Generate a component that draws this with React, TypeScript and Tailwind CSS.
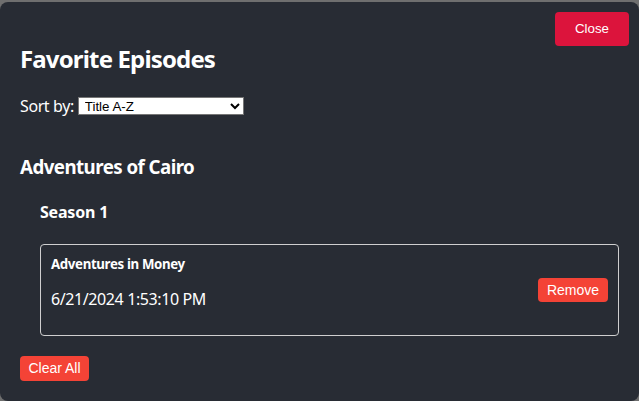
import React, { useState } from 'react';

const favorites = [
  {
    show: 'Adventures of Cairo',
    seasons: [
      {
        name: 'Season 1',
        episodes: [{ id: 1, title: 'Adventures in Money', addedAt: '6/21/2024 1:53:10 PM' }],
      },
    ],
  },
];

const App: React.FC = () => {
  const [sort, setSort] = useState('title-asc');

  return (
    <div className="h-[401px] w-[639px] overflow-hidden bg-[#6f6f6f] pt-[2px] font-['Noto_Sans',sans-serif] text-white">
      <div className="relative h-[399px] rounded-lg bg-[#282c34] px-5 pt-[41px]">
        <button className="absolute right-[10px] top-[10px] h-[34px] w-[74px] rounded-[4px] bg-[#dc143c] font-['Liberation_Sans',sans-serif] text-[13.33px] text-white">
          Close
        </button>

        <h2 className="text-[24px] font-bold leading-[32px] tracking-[-0.85px]">Favorite Episodes</h2>

        <div className="mt-[19px] flex items-center gap-[4px] text-[16px] leading-6">
          <span className="tracking-[-0.4px]">Sort by:</span>
          <select
            value={sort}
            onChange={(e) => setSort(e.target.value)}
            className="h-[18px] w-[166px] border border-[#767676] bg-white pl-[2px] font-['Liberation_Sans',sans-serif] text-[13.33px] leading-[16px] text-black"
          >
            <option value="title-asc">Title A-Z</option>
            <option value="title-desc">Title Z-A</option>
            <option value="date-new">Newest First</option>
            <option value="date-old">Oldest First</option>
          </select>
        </div>

        {favorites.map((fav) => (
          <div key={fav.show}>
            <h3 className="mt-[36px] text-[18.72px] font-bold leading-[26px] tracking-[-0.55px]">{fav.show}</h3>
            {fav.seasons.map((season) => (
              <div key={season.name} className="pl-5">
                <h4 className="mt-5 text-[16px] font-bold leading-6 tracking-[-0.2px]">{season.name}</h4>
                {season.episodes.map((ep) => (
                  <div
                    key={ep.id}
                    className="mt-5 flex items-center justify-between rounded-[4px] border border-[#cfcfcf] px-[10px] py-[10px]"
                  >
                    <div className="pb-[14px]">
                      <h5 className="text-[13.28px] font-bold leading-[18px] tracking-[-0.35px]">{ep.title}</h5>
                      <p className="mt-[14px] text-[16px] leading-6 tracking-[-0.4px]">{ep.addedAt}</p>
                    </div>
                    <button className="h-[24px] w-[70px] rounded-[4px] bg-[#f44336] font-['Liberation_Sans',sans-serif] text-[14px] text-white">
                      Remove
                    </button>
                  </div>
                ))}
              </div>
            ))}
          </div>
        ))}

        <button className="mt-5 h-[25px] w-[69px] rounded-[4px] bg-[#f44336] font-['Liberation_Sans',sans-serif] text-[14px] text-white">
          Clear All
        </button>
      </div>
    </div>
  );
};

export default App;
